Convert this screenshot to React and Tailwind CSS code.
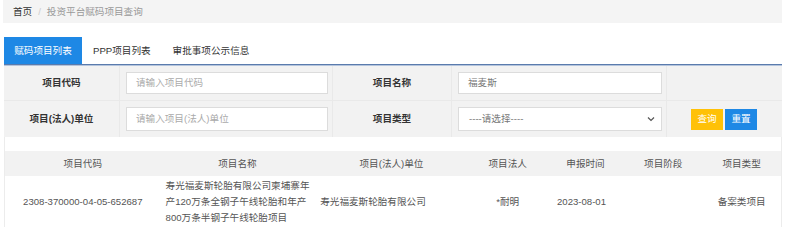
import React from "react";

const font = { fontFamily: '"Liberation Sans", "Noto Sans CJK SC", sans-serif' };

export default function App() {
  const cols = [
    { w: "w-[156px]", t: "项目代码" },
    { w: "w-[154px]", t: "项目名称" },
    { w: "w-[155px]", t: "项目(法人)单位" },
    { w: "w-[78px]", t: "项目法人" },
    { w: "w-[78px]", t: "申报时间" },
    { w: "w-[78px]", t: "项目阶段" },
    { w: "w-[79px]", t: "项目类型" },
  ];
  return (
    <div className="w-[785px] h-[242px] bg-white text-[9.6px] leading-[12px] overflow-hidden" style={font}>
      {/* breadcrumb */}
      <div className="mx-[3px] h-[23px] bg-[#f4f4f4] flex items-center pl-[10px] gap-[6px]">
        <span className="text-[#333]">首页</span>
        <span className="text-[#ccc]">/</span>
        <span className="text-[#999]">投资平台赋码项目查询</span>
      </div>

      {/* tabs */}
      <div className="ml-[4px] mr-[3px] mt-[14px] flex h-[28px] border-b border-[#5a7bad] shadow-[0_1px_0_#b4c4dc]">
        <div className="w-[78px] bg-[#1e88e5] text-white flex items-center justify-center">赋码项目列表</div>
        <div className="px-[11px] text-[#333] flex items-center">PPP项目列表</div>
        <div className="px-[11px] text-[#333] flex items-center">审批事项公示信息</div>
      </div>

      {/* form */}
      <div className="ml-[4px] mr-[3px] mt-[1px] bg-[#f2f2f2] text-[#333] font-bold">
        <div className="flex h-[35px] border-b border-[#e9e9e9]">
          <div className="w-[116px] flex items-center justify-center border-r border-[#e9e9e9]">项目代码</div>
          <div className="w-[213px] flex items-center pl-[6px] border-r border-[#e9e9e9]">
            <div className="w-[202px] h-[22px] bg-white border border-[#dcdcdc] flex items-center pl-[9px] text-[#aaa] font-normal">请输入项目代码</div>
          </div>
          <div className="w-[119px] flex items-center justify-center border-r border-[#e9e9e9]">项目名称</div>
          <div className="w-[215px] flex items-center pl-[6px] border-r border-[#e9e9e9]">
            <div className="w-[204px] h-[22px] bg-white border border-[#dcdcdc] flex items-center pl-[9px] text-[#777] font-normal">福麦斯</div>
          </div>
          <div className="flex-1"></div>
        </div>
        <div className="flex h-[36px]">
          <div className="w-[116px] flex items-center justify-center border-r border-[#e9e9e9]">项目(法人)单位</div>
          <div className="w-[213px] flex items-center pl-[6px] border-r border-[#e9e9e9]">
            <div className="w-[202px] h-[24px] bg-white border border-[#dcdcdc] flex items-center pl-[9px] text-[#aaa] font-normal">请输入项目(法人)单位</div>
          </div>
          <div className="w-[119px] flex items-center justify-center border-r border-[#e9e9e9]">项目类型</div>
          <div className="w-[215px] flex items-center pl-[6px] border-r border-[#e9e9e9]">
            <div className="w-[204px] h-[24px] bg-white border border-[#dcdcdc] flex items-center justify-between pl-[10px] pr-[6px] text-[#777] font-normal">
              <span>----请选择----</span>
              <svg width="8" height="6" viewBox="0 0 8 6"><path d="M1 1.5 L4 4.5 L7 1.5" stroke="#555" strokeWidth="1.2" fill="none" /></svg>
            </div>
          </div>
          <div className="flex-1 flex items-center pl-[24px] gap-[2px] font-normal">
            <div className="w-[32px] h-[21px] bg-[#ffc107] text-white flex items-center justify-center">查询</div>
            <div className="w-[32px] h-[21px] bg-[#1e88e5] text-white flex items-center justify-center">重置</div>
          </div>
        </div>
      </div>

      {/* results */}
      <div className="ml-[4px] mr-[3px] pt-[14px] border-x border-[#ececec] h-[90px]">
        <div className="flex h-[25px] bg-[#f2f2f2] text-[#555]">
          {cols.map((c) => (
            <div key={c.t} className={`${c.w} flex items-center justify-center`}>{c.t}</div>
          ))}
        </div>
        <div className="flex h-[51px] text-[#555]">
          <div className="w-[156px] flex items-center justify-center">2308-370000-04-05-652687</div>
          <div className="w-[154px] flex items-center pl-[5px] leading-[16px]">寿光福麦斯轮胎有限公司柬埔寨年产120万条全钢子午线轮胎和年产800万条半钢子午线轮胎项目</div>
          <div className="w-[155px] flex items-center pl-[6px]">寿光福麦斯轮胎有限公司</div>
          <div className="w-[78px] flex items-center justify-center">*耐明</div>
          <div className="w-[78px] flex items-center justify-center pr-[8px]">2023-08-01</div>
          <div className="w-[78px]"></div>
          <div className="w-[79px] flex items-center justify-center">备案类项目</div>
        </div>
      </div>
    </div>
  );
}
